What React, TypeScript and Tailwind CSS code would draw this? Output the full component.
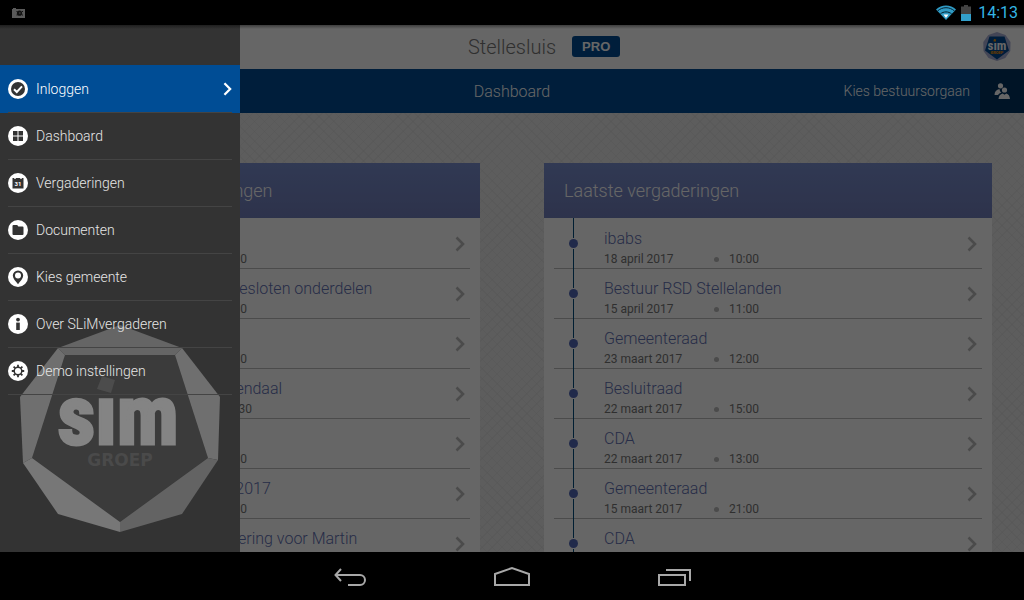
import type { ReactNode } from "react";

type Meeting = { title?: string; date?: string; time?: string };

const upcoming: Meeting[] = [
  { date: "19 april 2017", time: "20:00" },
  { title: "Commissie over de besloten onderdelen", date: "20 april 2017", time: "19:00" },
  { date: "24 april 2017", time: "20:00" },
  { title: "Gemeenteraad Roosendaal", date: "dinsdag 25 april 2017", time: "19:30" },
  { date: "10 mei 2017", time: "20:00" },
  { title: "Besluitraad voorjaar 2017", date: "17 mei 2017", time: "20:00" },
  { title: "Demonstratie vergadering voor Martin" },
];

const latest: Meeting[] = [
  { title: "ibabs", date: "18 april 2017", time: "10:00" },
  { title: "Bestuur RSD Stellelanden", date: "15 april 2017", time: "11:00" },
  { title: "Gemeenteraad", date: "23 maart 2017", time: "12:00" },
  { title: "Besluitraad", date: "22 maart 2017", time: "15:00" },
  { title: "CDA", date: "22 maart 2017", time: "13:00" },
  { title: "Gemeenteraad", date: "15 maart 2017", time: "21:00" },
  { title: "CDA" },
];

const menu: { label: string; active?: boolean; glyph: ReactNode }[] = [
  {
    label: "Inloggen",
    active: true,
    glyph: (
      <>
        <circle cx="10" cy="10" r="7" fill="#333" />
        <path d="M6 10.2l2.8 2.8 5.2-5.6" fill="none" stroke="#fff" strokeWidth="2" />
      </>
    ),
  },
  {
    label: "Dashboard",
    glyph: <path d="M5 5h4.5v4.5H5zM10.5 5H15v4.5h-4.5zM5 10.5h4.5V15H5zM10.5 10.5H15V15h-4.5z" fill="#333" />,
  },
  {
    label: "Vergaderingen",
    glyph: (
      <>
        <path d="M4.5 5h1.8v1h1.4V5h4.6v1h1.4V5h1.8v10.5h-11z" fill="#333" />
        <text x="10" y="13" textAnchor="middle" fontSize="6" fontWeight="700" fill="#fff">31</text>
      </>
    ),
  },
  {
    label: "Documenten",
    glyph: <path d="M5.5 5h3.7l1.2 1.4h4.1a1 1 0 011 1V14a1 1 0 01-1 1h-9a1 1 0 01-1-1V6a1 1 0 011-1z" fill="#333" />,
  },
  {
    label: "Kies gemeente",
    glyph: (
      <>
        <path d="M10 17.2c-2.2-2.6-5.2-5.4-5.2-8.6a5.2 5.2 0 0110.4 0c0 3.2-3 6-5.2 8.6z" fill="#333" />
        <circle cx="10" cy="8.6" r="3" fill="#fff" />
      </>
    ),
  },
  {
    label: "Over SLiMvergaderen",
    glyph: (
      <>
        <circle cx="10" cy="5.6" r="1.9" fill="#333" />
        <path d="M8.2 8.6h3.6V16H8.2z" fill="#333" />
      </>
    ),
  },
  {
    label: "Demo instellingen",
    glyph: (
      <>
        <circle cx="10" cy="10" r="3.8" fill="none" stroke="#333" strokeWidth="1.5" />
        <path
          d="M10 3.800v2.200M10 14v2.200M3.800 10H6M14 10h2.200M5.600 5.600l1.600 1.600M12.800 12.800l1.600 1.600M5.600 14.400l1.600-1.600M12.800 7.200l1.600-1.600"
          stroke="#333"
          strokeWidth="1.8"
        />
      </>
    ),
  },
];

function Chevron({ className }: { className: string }) {
  return (
    <svg viewBox="0 0 10 16" className={className} fill="none" stroke="currentColor" strokeWidth="2.6">
      <path d="M1.5 1.5L8 8l-6.5 6.5" />
    </svg>
  );
}

function StatusBar() {
  return (
    <div className="flex h-[25px] shrink-0 items-center justify-between bg-black pl-3 pr-[6px]">
      <svg viewBox="0 0 13 10" className="h-[10px] w-[13px]">
        <path d="M0 1h1V0h3v1h9v9H0z" fill="#5a5a5a" />
        <circle cx="7.500" cy="5.200" r="2.600" fill="#111" />
        <path d="M4.500 3.500h1M10 3.500h1M4.500 7h1M10 7h1" stroke="#111" strokeWidth="1" />
        <circle cx="7.800" cy="5" r="1" fill="#333" />
      </svg>
      <div className="flex items-center text-[#33b5e5]">
        <svg viewBox="0 0 20 15" className="mr-[5px] h-[15px] w-5">
          <path d="M0 4.500C5.500-.8 14.500-.8 20 4.500L10 15z" fill="#2f9bc5" />
          <path d="M1.500 6C6.500 1.600 13.500 1.600 18.500 6M4.300 9c3.200-2.800 8.200-2.800 11.400 0" fill="none" stroke="#062230" strokeWidth="1" />
          <path d="M7.500 9.500h5L10 13z" fill="#fff" />
        </svg>
        <svg viewBox="0 0 10 16" className="mr-[7px] h-4 w-[10px]">
          <path d="M0 1.500h3V0h4v1.500h3V16H0z" fill="#444" />
          <path d="M0 9h10v7H0z" fill="#33a0cb" />
        </svg>
        <span className="text-base leading-5">14:13</span>
      </div>
    </div>
  );
}

function SimBadge() {
  return (
    <svg viewBox="0 0 28 29" className="h-[29px] w-7" aria-label="SIM groep">
      <path d="M14 0l8.500 3 5 7-.2 9-5 7L14 29l-8.500-3-5-7-.2-9 5-7z" fill="#a9b0d6" />
      <path d="M6.500 4.500h15L26 18.500 14 27.500 2 18.500z" fill="#004a92" />
      <path d="M11 7l2.200.6-.6 2.200-2.200-.6z" fill="#f39200" />
      <text
        x="14"
        y="18"
        textAnchor="middle"
        fontFamily="Roboto Condensed, Roboto, sans-serif"
        fontSize="13"
        fontWeight="700"
        fill="#fff"
      >
        sım
      </text>
      <text x="14" y="22" textAnchor="middle" fontSize="4" fontWeight="900" fill="#f39200">GROEP</text>
    </svg>
  );
}

function Header() {
  return (
    <header className="shrink-0">
      <div className="grid h-11 grid-cols-[1fr_auto_1fr] items-center bg-white">
        <h1 className="col-start-2 text-xl font-light text-[#777]">Stellesluis</h1>
        <div className="flex items-center justify-between pb-[2px] pl-4 pr-[13px]">
          <span className="rounded-[3px] bg-[#004d95] px-[10px] font-[Liberation_Sans,sans-serif] text-[13px] font-bold leading-[21px] text-white">
            PRO
          </span>
          <SimBadge />
        </div>
      </div>
      <div className="grid h-11 grid-cols-[1fr_auto_1fr] items-center bg-[#004d95] text-white">
        <h2 className="col-start-2 pt-[2px] text-base font-light">Dashboard</h2>
        <div className="flex h-full items-center justify-end gap-[10px]">
          <button className="text-sm font-light">Kies bestuursorgaan</button>
          <button className="flex h-full w-11 items-center justify-center bg-[#003260]" aria-label="Bestuursorgaan">
            <svg viewBox="0 0 16 16" className="size-4" fill="#fff">
              <circle cx="6.500" cy="2.800" r="2.600" />
              <path d="M.5 12c0-3.200 1.800-5.500 5-6 .2 2 .8 3 2 3.600-1.600.6-2.800 1.400-3.500 2.400z" />
              <circle cx="10.500" cy="7" r="2.600" />
              <path d="M4.500 16c.2-3.200 1.800-5 4.200-5.600l1.800 1.400 1.800-1.400c2.200.6 3.500 2.400 3.700 5.600z" />
            </svg>
          </button>
        </div>
      </div>
    </header>
  );
}

function MeetingPanel({ title, meetings }: { title: string; meetings: Meeting[] }) {
  return (
    <section className="bg-white">
      <h3 className="bg-linear-to-b from-[#7a8fd0] to-[#727fbc] px-5 text-lg font-light leading-[55px] text-white">
        {title}
      </h3>
      <ul className="px-[10px] pt-px">
        {meetings.map((meeting, i) => (
          <li key={i} className="flex h-[50px] items-center border-b border-[#bbb]">
            <div className="flex w-[39px] shrink-0 flex-col items-center self-stretch">
              <span className="-mt-px w-px flex-1 bg-[#004d7d]" />
              <span className="my-px size-[9px] rounded-full bg-[#5469b8]" />
              <span className="-mb-px w-px flex-1 bg-[#004d7d]" />
            </div>
            <div className="min-w-0 flex-1 self-start pl-[11px] pt-[10px]">
              <p className="h-5 truncate text-base font-light leading-5 text-[#5f70b2]">{meeting.title}</p>
              {meeting.date && (
                <p className="flex items-center text-xs leading-5 text-[#777]">
                  <span className="min-w-[110px]">{meeting.date}</span>
                  <span className="mr-[10px] size-[5px] rounded-full bg-[#bbb]" />
                  {meeting.time}
                </p>
              )}
            </div>
            <Chevron className="mr-[5px] h-4 w-[10px] text-[#bbb]" />
          </li>
        ))}
      </ul>
    </section>
  );
}

function DrawerLogo() {
  return (
    <svg viewBox="0 325 240 207" className="absolute bottom-5 left-0 w-full" aria-label="SIM groep">
      <path d="M65 355h110l33 103-88 64-88-64z" fill="#3b3b3b" />
      <path d="M120 325l62 23-7 7H65l-7-7z" fill="#656565" />
      <path d="M182 348l38 49-2 63-10-2-33-103z" fill="#6f6f6f" />
      <path d="M58 348l-38 49 3 66 9-5 33-103z" fill="#6f6f6f" />
      <path d="M23 463l9-5 88 64v10l-62-18z" fill="#777" />
      <path d="M218 460l-10-2-88 64v10l62-18z" fill="#636363" />
      <path d="M102 376l13 4-4 13-14-4z" fill="#4c4c4c" />
      <text
        x="118"
        y="444"
        textAnchor="middle"
        fontFamily="Roboto Condensed, Roboto, sans-serif"
        fontSize="83"
        fontWeight="700"
        fill="#848484"
        stroke="#848484"
        strokeWidth="3"
      >
        sım
      </text>
      <text x="120" y="466" textAnchor="middle" fontFamily="DejaVu Sans" fontSize="17" fontWeight="700" fill="#4a4a4a">
        GROEP
      </text>
    </svg>
  );
}

function Drawer() {
  return (
    <aside className="absolute inset-y-0 left-0 w-60 bg-[#333] pt-10">
      <DrawerLogo />
      <nav className="relative">
        {menu.map((item) => (
          <a
            key={item.label}
            href="#"
            className={`block px-2 text-sm font-light ${item.active ? "bg-[#004d95] pt-px text-white" : "text-[#e6e6e6]"}`}
          >
            <span className="flex h-[47px] items-center border-b border-[#444]">
              <svg viewBox="0 0 20 20" className="mr-2 size-5">
                <circle cx="10" cy="10" r="10" fill="#fff" />
                {item.glyph}
              </svg>
              <span className="flex-1">{item.label}</span>
              {item.active && <Chevron className="h-[14px] w-[9px] text-white" />}
            </span>
          </a>
        ))}
      </nav>
    </aside>
  );
}

function NavigationBar() {
  return (
    <div className="flex h-12 shrink-0 items-center justify-center bg-black text-[#a8a8a8]">
      <button className="flex w-[162px] justify-center" aria-label="Terug">
        <svg viewBox="0 0 34 20" className="h-5 w-[34px]" fill="none" stroke="currentColor" strokeWidth="2">
          <path d="M8 3L2.500 9 8 15M2.500 9H27a5 5 0 010 10H15" />
        </svg>
      </button>
      <button className="flex w-[162px] justify-center" aria-label="Start">
        <svg viewBox="0 0 36 20" className="h-5 w-9" fill="none" stroke="currentColor" strokeWidth="2">
          <path d="M1 8l17-6 17 6v11H1z" />
        </svg>
      </button>
      <button className="flex w-[162px] justify-center" aria-label="Recente apps">
        <svg viewBox="0 0 34 20" className="h-5 w-[34px]" fill="none" stroke="currentColor" strokeWidth="2">
          <path d="M2 9h26v10H2zM9 4h24v11" />
        </svg>
      </button>
    </div>
  );
}

export default function App() {
  return (
    <div className="flex h-screen flex-col overflow-hidden font-[Roboto,sans-serif]">
      <StatusBar />
      <div className="relative flex min-h-0 flex-1 flex-col overflow-hidden">
        <Header />
        <main className="grid flex-1 grid-cols-2 gap-16 bg-[#e9e9e9] bg-[repeating-linear-gradient(45deg,#0000_0_6px,#00000008_6px_7px),repeating-linear-gradient(-45deg,#0000_0_6px,#00000008_6px_7px)] px-8 pt-[50px]">
          <MeetingPanel title="Aankomende vergaderingen" meetings={upcoming} />
          <MeetingPanel title="Laatste vergaderingen" meetings={latest} />
        </main>
        <div className="absolute inset-0 bg-black/60" />
        <Drawer />
        <div className="absolute inset-x-0 top-0 h-1 bg-linear-to-b from-black/40 to-transparent" />
      </div>
      <NavigationBar />
    </div>
  );
}
